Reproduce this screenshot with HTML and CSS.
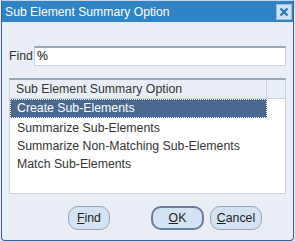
FILE: index.html
```html
<html>
<head>
<title>Sub Element Summary Option</title>
<meta charset="utf-8">
<link rel="stylesheet" href="styles.css">
</head>
<body>

<div class="window">
  <div class="titlebar">
    <span class="title">Sub Element Summary Option</span>
    <span class="close">
      <svg width="14" height="14" viewBox="0 0 14 14">
        <path d="M3.5 3.5 L10.5 10.5 M10.5 3.5 L3.5 10.5" stroke="#2e7cbf" stroke-width="2.4"/>
      </svg>
    </span>
  </div>

  <div class="content">
    <div class="find-row">
      <label class="find-label">Find</label>
      <div class="find-input">%</div>
    </div>

    <div class="list">
      <div class="list-header">
        <div class="col-main">Sub Element Summary Option</div>
        <div class="col-spare"></div>
      </div>
      <div class="row selected">Create Sub-Elements</div>
      <div class="row">Summarize Sub-Elements</div>
      <div class="row">Summarize Non-Matching Sub-Elements</div>
      <div class="row">Match Sub-Elements</div>
    </div>

    <div class="buttons">
      <button class="btn btn-find"><u>F</u>ind</button>
      <button class="btn btn-ok default"><u>O</u>K</button>
      <button class="btn btn-cancel"><u>C</u>ancel</button>
    </div>
  </div>
</div>

</body>
</html>
```

FILE: styles.css
```css
body {
  margin: 0;
  background: #e9eef6;
  font-family: "Liberation Sans", Arial, sans-serif;
  font-size: 12.3px;
  color: #222;
}

.window {
  margin-left: 1px;
  width: 291px;
  height: 239px;
  border: 1px solid #3d5d8c;
  border-top: 1px solid #c9d6e6;
  border-radius: 0 0 4px 4px;
  background: #e9eef6;
}

.titlebar {
  height: 21px;
  background: #2e84c4;
  display: flex;
  align-items: center;
  justify-content: space-between;
  padding: 0 1px 0 3px;
}

.title {
  color: #fff;
  font-size: 12.2px;
}

.close {
  width: 14px;
  height: 14px;
  background: #cfe0f1;
  border: 1px solid #9bbbd9;
  display: flex;
}

.content {
  padding: 24px 7px 0 7px;
}

.find-row {
  display: flex;
  align-items: center;
  height: 20px;
}

.find-label {
  width: 25px;
  color: #333;
}

.find-input {
  flex: 1;
  height: 17px;
  line-height: 17px;
  padding-left: 2px;
  background: #fff;
  border: 1px solid #c6d3e3;
  border-top: 2px solid #9aa5b3;
  color: #000;
}

.list {
  margin-top: 12px;
  height: 113px;
  background: #fff;
  border: 1px solid #c6d3e3;
  border-top: 2px solid #9aa5b3;
}

.list-header {
  display: flex;
  height: 18px;
  background: #e9eef6;
  border-bottom: 1px solid #c6d3e3;
}

.col-main {
  flex: 1;
  padding-left: 6px;
  line-height: 18px;
  color: #333;
  border-right: 1px solid #c6d3e3;
}

.col-spare {
  width: 18px;
}

.row {
  height: 18px;
  line-height: 18px;
  padding-left: 7px;
  color: #333;
}

.row.selected {
  height: 19px;
  line-height: 19px;
  margin-bottom: 1px;
  background: #4a6890;
  color: #fff;
  margin-right: 18px;
  outline: 1px dotted #fff;
  outline-offset: -1px;
}

.buttons {
  display: flex;
  margin-top: 12px;
  padding-left: 59px;
}

.btn {
  height: 24px;
  font-family: "Liberation Sans", Arial, sans-serif;
  font-size: 12.3px;
  color: #222;
  background: #d3e3f4;
  border: 1px solid #9aa5b3;
  border-radius: 10px;
  padding: 0;
}

.btn-find {
  width: 42px;
}

.btn-ok {
  width: 53px;
  margin-left: 41px;
}

.btn-ok.default {
  border: 2px solid #6b7f9c;
}

.btn-cancel {
  width: 52px;
  margin-left: 6px;
}
```
